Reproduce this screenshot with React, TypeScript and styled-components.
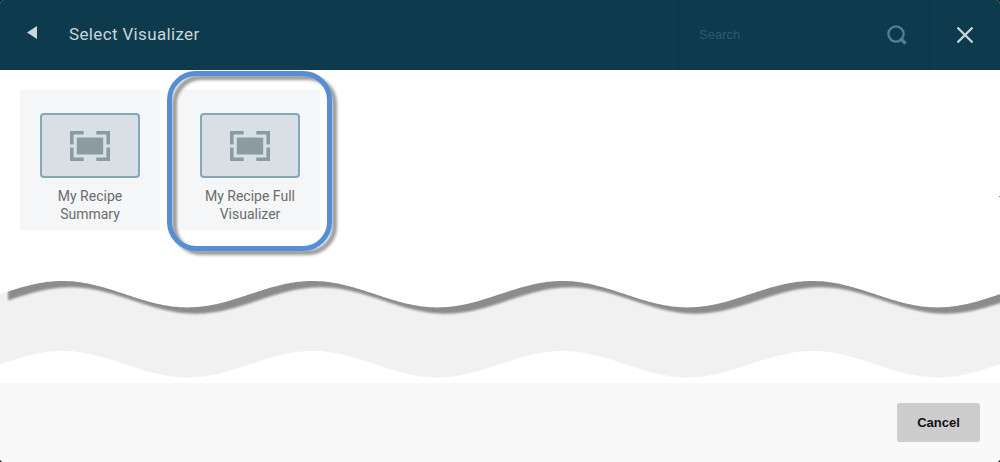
import React from 'react';
import styled, { createGlobalStyle } from 'styled-components';

const GlobalStyle = createGlobalStyle`
  * { box-sizing: border-box; }
  body { margin: 0; background: #000; }
`;

const Dialog = styled.div`
  display: flex;
  flex-direction: column;
  width: 1000px;
  height: 462px;
  overflow: hidden;
  border-radius: 4px;
  background: #fff;
  font-family: Roboto, 'Liberation Sans', sans-serif;
`;

const Header = styled.header`
  display: flex;
  flex: none;
  height: 70px;
  background: #0d3b4d;
`;

const BackButton = styled.button`
  display: flex;
  align-items: center;
  width: 69px;
  padding: 0 0 6px 27px;
  border: 0;
  background: none;
`;

const Title = styled.h1`
  flex: 1;
  margin: 0;
  color: #cad5da;
  font-size: 17px;
  font-weight: 400;
  line-height: 69px;
  letter-spacing: 0.35px;
`;

const SearchBox = styled.div`
  display: flex;
  align-items: center;
  justify-content: space-between;
  width: 251px;
  padding: 0 22px 0 20px;
  border-left: 1px solid #093244;
  color: #2b5a6c;
  font: 13px 'Liberation Sans', Arial, sans-serif;
`;

const SearchHint = styled.span`
  padding-bottom: 2px;
`;

const CloseButton = styled.button`
  display: flex;
  align-items: center;
  justify-content: center;
  width: 71px;
  padding: 0;
  border: 0;
  border-left: 1px solid #093244;
  background: none;
`;

const Content = styled.main`
  position: relative;
  display: flex;
  flex: none;
  flex-direction: column;
  height: 313px;
`;

const Tiles = styled.div`
  display: flex;
  gap: 20px;
  height: 205px;
  padding: 20px 20px 0;
`;

const Tile = styled.div`
  position: relative;
  display: flex;
  flex-direction: column;
  align-items: center;
  width: 140px;
  height: 140px;
  padding-top: 23px;
  background: #f4f6f8;
`;

const Thumb = styled.div`
  display: flex;
  align-items: center;
  justify-content: center;
  width: 100px;
  height: 65px;
  border: 2px solid #86a7b5;
  border-radius: 4px;
  background: #d8e0e6;
`;

const TileName = styled.div`
  margin-top: 9px;
  color: #6c6c6c;
  font-size: 14px;
  line-height: 18px;
  text-align: center;
`;

const Highlight = styled.div`
  position: absolute;
  top: -19px;
  left: -13px;
  width: 165px;
  height: 180px;
  border: 5px solid #558ed5;
  border-radius: 29px;
  filter: drop-shadow(5px 4px 1.5px rgba(0, 0, 0, 0.4));
`;

const Speck = styled.i`
  position: absolute;
  top: 126px;
  right: 0;
  width: 1px;
  height: 1px;
  background: #777;
`;

const Wave = styled.svg`
  display: block;
`;

const Footer = styled.footer`
  display: flex;
  flex: 1;
  align-items: flex-start;
  justify-content: flex-end;
  padding: 20px 20px 0;
  background: #f9f9f9;
`;

const CancelButton = styled.button`
  width: 83px;
  height: 39px;
  padding: 0;
  border: 0;
  border-radius: 3px;
  background: #cdcdcd;
  color: #111;
  font: bold 13px 'Liberation Sans', Arial, sans-serif;
`;

const waveEdge = (from: number, to: number, y: number, shift = 0) => {
  const points: string[] = [];
  const step = from < to ? 2 : -2;
  for (let x = from; step > 0 ? x <= to : x >= to; x += step) {
    const dy = -13.2 * Math.cos(((x - shift - 62.5) * 2 * Math.PI) / 250);
    points.push(`${x},${(y + dy).toFixed(2)}`);
  }
  return points.join(' ');
};

// The band keeps the same curve on both edges, 70px apart.
const band = `M${waveEdge(0, 1000, 19.2)} L${waveEdge(1000, 0, 89.2)}Z`;
const shadow = `M${waveEdge(8, 1010, 9)} L${waveEdge(1010, 8, 25.5, 8)}Z`;

const TornEdge = () => (
  <Wave width="1000" height="108" viewBox="0 0 1000 108">
    <defs>
      <clipPath id="band">
        <path d={band} />
      </clipPath>
      <filter id="soft" x="-2%" y="-20%" width="104%" height="140%">
        <feGaussianBlur stdDeviation="0.8" />
      </filter>
    </defs>
    <path d={band} fill="#f1f1f1" />
    <g clipPath="url(#band)">
      <path d={shadow} fill="#8c8c8c" filter="url(#soft)" />
    </g>
  </Wave>
);

const FrameIcon = () => (
  <svg width="40" height="30" viewBox="0 0 40 30">
    <path
      d="M1.8 13.5V1.8H13.7M26.3 1.8H38.2V13.5M38.2 16.5V28.2H26.3M13.7 28.2H1.8V16.5"
      fill="none"
      stroke="#8b9ba2"
      strokeWidth="3.6"
    />
    <path d="M6.8 6.6H33.2V23.6H6.8Z" fill="#8b9ba2" />
  </svg>
);

const VisualizerTile = ({ lines, selected }: { lines: string[]; selected?: boolean }) => (
  <Tile>
    <Thumb>
      <FrameIcon />
    </Thumb>
    <TileName>
      {lines[0]}
      <br />
      {lines[1]}
    </TileName>
    {selected && <Highlight />}
  </Tile>
);

export default function App() {
  return (
    <>
      <GlobalStyle />
      <Dialog>
        <Header>
          <BackButton aria-label="Back">
            <svg width="10" height="13" viewBox="0 0 10 13">
              <path d="M0 6.5L10 0V13Z" fill="#cbd5da" />
            </svg>
          </BackButton>
          <Title>Select Visualizer</Title>
          <SearchBox>
            <SearchHint>Search</SearchHint>
            <svg width="20" height="20" viewBox="0 0 20 20" fill="none" stroke="#557f91">
              <circle cx="9" cy="9" r="7.6" strokeWidth="2.3" />
              <path d="M13.2 13.2L18.6 18.6" strokeWidth="3.4" />
            </svg>
          </SearchBox>
          <CloseButton aria-label="Close">
            <svg width="16" height="16" viewBox="0 0 16 16">
              <path
                d="M1.2 1.2L14.8 14.8M14.8 1.2L1.2 14.8"
                stroke="#cbd5da"
                strokeWidth="2.3"
                strokeLinecap="round"
              />
            </svg>
          </CloseButton>
        </Header>
        <Content>
          <Tiles>
            <VisualizerTile lines={['My Recipe', 'Summary']} />
            <VisualizerTile lines={['My Recipe Full', 'Visualizer']} selected />
          </Tiles>
          <TornEdge />
          <Speck />
        </Content>
        <Footer>
          <CancelButton>Cancel</CancelButton>
        </Footer>
      </Dialog>
    </>
  );
}
